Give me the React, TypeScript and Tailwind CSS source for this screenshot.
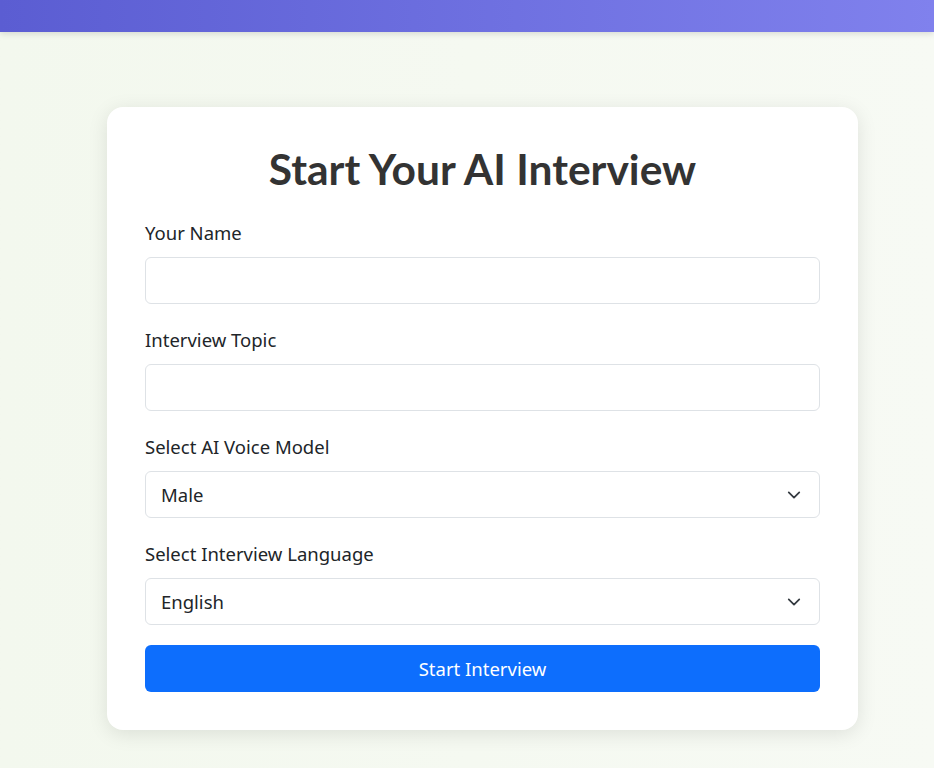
const FONT = "font-['Segoe_UI','Noto_Sans',sans-serif]";

function Chevron() {
  return (
    <svg
      className="pointer-events-none absolute right-[19px] top-1/2 -translate-y-1/2"
      width="14"
      height="14"
      viewBox="0 0 16 16"
      fill="none"
      stroke="#343a40"
      strokeWidth="2"
      strokeLinecap="round"
      strokeLinejoin="round"
    >
      <path d="m2 5 6 6 6-6" />
    </svg>
  );
}

function Field({ label, children }: { label: string; children: React.ReactNode }) {
  return (
    <div className="mb-[23px]">
      <label className="mb-[12px] block text-[18.5px] leading-[25px] text-[#212529]">{label}</label>
      {children}
    </div>
  );
}

function App() {
  return (
    <div className={`min-h-screen bg-gradient-to-r from-[#f3f8ee] to-[#f7faf4] ${FONT}`}>
      <div className="h-[32px] bg-gradient-to-r from-[#5b5dd2] to-[#8081ed] shadow-[0_2px_6px_rgba(0,0,0,0.12)]" />

      <div className="flex pl-[107px] pt-[75px] pb-10">
        <div className="w-[751px] rounded-[16px] bg-white px-[38px] pt-[38px] pb-[38px] shadow-[0_4px_20px_rgba(0,0,0,0.1)]">
          <h1 className="mb-[27px] text-center font-['Lato',sans-serif] text-[42.5px] font-bold leading-[48px] text-[#333333]">
            Start Your AI Interview
          </h1>

          <Field label="Your Name">
            <input className="block h-[47px] w-full rounded-[6px] border border-[#dee2e6] px-4 text-[18.5px] outline-none" />
          </Field>

          <Field label="Interview Topic">
            <input className="block h-[47px] w-full rounded-[6px] border border-[#dee2e6] px-4 text-[18.5px] outline-none" />
          </Field>

          <Field label="Select AI Voice Model">
            <div className="relative">
              <select className="block h-[47px] w-full appearance-none rounded-[6px] border border-[#dee2e6] bg-white pl-[15px] pr-10 text-[18.5px] text-[#212529] outline-none">
                <option>Male</option>
                <option>Female</option>
              </select>
              <Chevron />
            </div>
          </Field>

          <div className="mb-[20px]">
            <label className="mb-[12px] block text-[18.5px] leading-[25px] text-[#212529]">
              Select Interview Language
            </label>
            <div className="relative">
              <select className="block h-[47px] w-full appearance-none rounded-[6px] border border-[#dee2e6] bg-white pl-[15px] pr-10 text-[18.5px] text-[#212529] outline-none">
                <option>English</option>
                <option>Spanish</option>
              </select>
              <Chevron />
            </div>
          </div>

          <button className="block h-[47px] w-full rounded-[6px] bg-[#0d6efd] text-[18.5px] text-white">
            Start Interview
          </button>
        </div>
      </div>
    </div>
  );
}

export default App;
